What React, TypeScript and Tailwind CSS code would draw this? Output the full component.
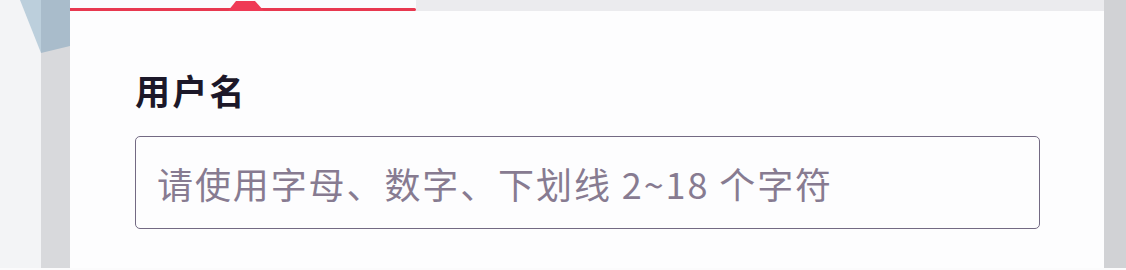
const cjk = { fontFamily: '"Noto Sans CJK SC", "Noto Sans", sans-serif' };

function App() {
  return (
    <div className="w-[1126px] h-[270px] flex flex-col bg-[#fbfbfc] overflow-hidden" style={cjk}>
      <div className="flex h-[268px]">
        {/* left backdrop */}
        <div className="relative flex w-[70px] shrink-0">
          <div className="w-[41px] bg-[#f3f4f6]" />
          <div className="w-[29px] bg-[#d8d9dc]" />
          <svg className="absolute left-0 top-0" width="70" height="60" viewBox="0 0 70 60">
            <polygon points="20,0 41,0 41,53" fill="#bccfdc" />
            <polygon points="41,0 70,0 70,46 41,53" fill="#a9bccb" />
          </svg>
        </div>

        {/* main column */}
        <div className="flex flex-col w-[1034px] shrink-0">
          <div className="relative h-[11px] flex shrink-0">
            <div className="w-[346px] bg-[#fbfbfc] flex flex-col justify-end">
              <div className="h-[3px] bg-[#e8384f] rounded-r-full" />
            </div>
            <div className="flex-1 bg-[#ebebee]" />
            <svg className="absolute left-[158px] top-0" width="36" height="11" viewBox="0 0 36 11">
              <polygon points="0,11 8,1 27,1 36,11" fill="#ef3a55" />
            </svg>
          </div>
          <div className="flex-1 bg-[#fdfdfe] pl-[65px] pt-[58px]">
            <div className="text-[35px] leading-[42px] font-bold text-[#1c1829] tracking-[2.3px]">用户名</div>
            <div className="mt-[25px] w-[905px] h-[93px] border border-[#736a83] rounded-[5px] flex items-center pl-[21px]">
              <span className="text-[36px] text-[#877b91] tracking-[1.9px]">请使用字母、数字、下划线 2~18 个字符</span>
            </div>
          </div>
        </div>

        {/* right strip */}
        <div className="flex-1 bg-[#d1d2d5]" />
      </div>
    </div>
  );
}

export default App;
